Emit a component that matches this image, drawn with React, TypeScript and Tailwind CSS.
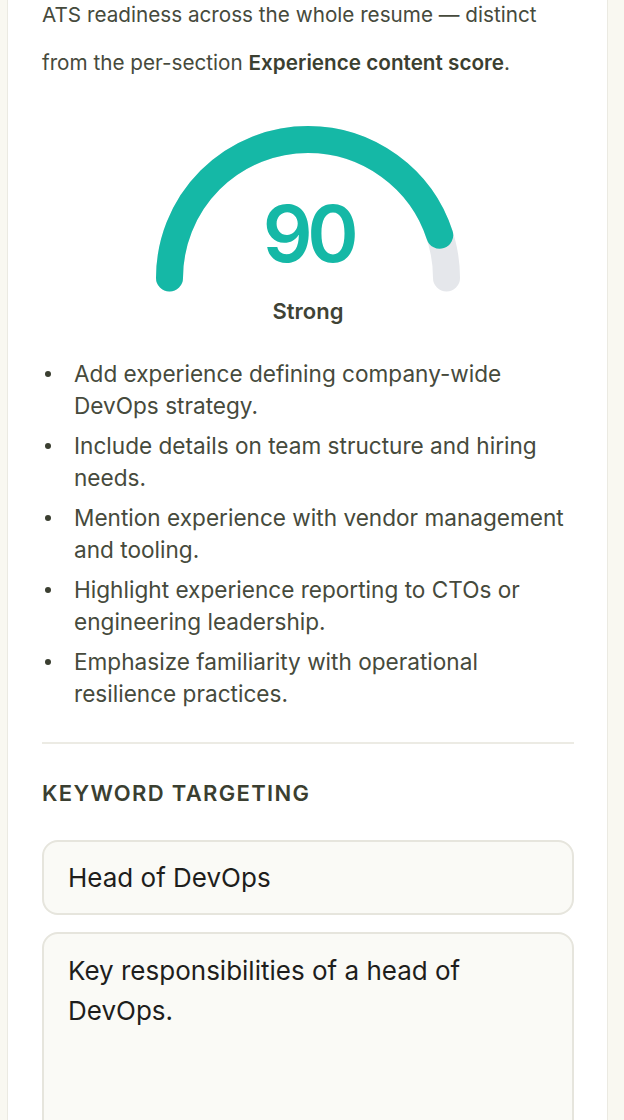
import React from "react";

const FONT = "font-['Inter','Noto_Sans',sans-serif]";

const TIPS = [
  "Add experience defining company-wide DevOps strategy.",
  "Include details on team structure and hiring needs.",
  "Mention experience with vendor management and tooling.",
  "Highlight experience reporting to CTOs or engineering leadership.",
  "Emphasize familiarity with operational resilience practices.",
];

function ScoreGauge({ score, label }: { score: number; label: string }) {
  const pct = Math.max(0, Math.min(100, score)) / 100;
  return (
    <div className="flex flex-col items-center">
      <div className="relative h-[166px] w-[304px]">
        <svg width="304" height="166" viewBox="0 0 304 166" fill="none">
          <path
            d="M 13.5 152 A 138.5 138.5 0 0 1 290.5 152"
            stroke="#e5e7eb"
            strokeWidth="27"
            strokeLinecap="round"
          />
          <path
            d="M 13.5 152 A 138.5 138.5 0 0 1 290.5 152"
            stroke="#15b8a6"
            strokeWidth="27"
            strokeLinecap="round"
            pathLength={100}
            strokeDasharray={`${pct * 100} 100`}
          />
        </svg>
        <div className="absolute inset-x-0 top-[60px] text-center text-[78px] font-semibold leading-[96px] tracking-[-0.07em] text-[#15b8a6]">
          {score}
        </div>
      </div>
      <p className="mt-[5px] text-[22px] font-semibold leading-[28px] text-[#3f4335]">{label}</p>
    </div>
  );
}

export default function App() {
  return (
    <div className={`min-h-screen bg-[#f9f8f1] pl-[7px] pr-[16px] ${FONT}`}>
      <div className="border-x border-[#ebeae2] bg-white pl-[34px] pr-[33px] pb-10">
        <p className="-mt-[9px] text-[20.7px] leading-[48px] text-[#464a3c]">
          ATS readiness across the whole resume — distinct from the per-section{" "}
          <strong className="font-semibold text-[#3b3f31]">Experience content score</strong>.
        </p>

        <div className="mt-[39px]">
          <ScoreGauge score={90} label="Strong" />
        </div>

        <ul className="mt-[33px] flex flex-col gap-2">
          {TIPS.map((tip) => (
            <li key={tip} className="flex gap-[23px] pl-[3px] text-[22.6px] leading-[32px] text-[#464a3c]">
              <span className="mt-[13px] h-[6px] w-[6px] shrink-0 rounded-full bg-[#3b3f31]" />
              <span>{tip}</span>
            </li>
          ))}
        </ul>

        <div className="mt-[32px] border-t-2 border-[#ecebe4]" />

        <h3 className="mt-[35px] text-[22px] font-semibold uppercase leading-[28px] tracking-[0.06em] text-[#3b3f31]">
          Keyword targeting
        </h3>

        <div className="mt-[33px] flex flex-col gap-[17px]">
          <input
            defaultValue="Head of DevOps"
            className="h-[75px] w-full rounded-[16px] border-2 border-[#e6e5dd] bg-[#fafaf6] px-[24px] text-[26px] text-[#1e1e1c] outline-none"
          />
          <textarea
            defaultValue="Key responsibilities of a head of DevOps."
            rows={6}
            className="w-full resize-none rounded-[16px] border-2 border-[#e6e5dd] bg-[#fafaf6] px-[24px] py-[17px] text-[26px] leading-[40px] text-[#1e1e1c] outline-none"
          />
        </div>
      </div>
    </div>
  );
}
